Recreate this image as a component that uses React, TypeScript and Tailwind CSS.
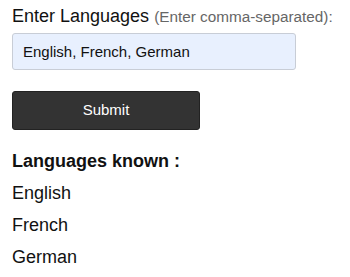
import { useState } from "react";

const App = () => {
  const [value, setValue] = useState("English, French, German");
  const [languages, setLanguages] = useState<string[]>(["English", "French", "German"]);

  const handleSubmit = () => {
    setLanguages(
      value
        .split(",")
        .map((l) => l.trim())
        .filter((l) => l.length > 0)
    );
  };

  return (
    <div className="px-3 pt-[5px] text-[#111] font-['Liberation_Sans',Arial,sans-serif]">
      <label className="block text-[18px] leading-[22px]">
        Enter Languages{" "}
        <span className="text-[15.3px] text-[#666]">(Enter comma-separated):</span>
      </label>
      <input
        value={value}
        onChange={(e) => setValue(e.target.value)}
        className="mt-[5px] w-[284px] h-[37px] px-[10px] text-[15px] bg-[#e8f0fe] border border-[#c8cdd6] rounded-[3px] outline-none"
      />
      <button
        onClick={handleSubmit}
        className="block mt-[21px] w-[188px] h-[39px] bg-[#333] text-white text-[15px] rounded-[3px] border border-[#222]"
      >
        Submit
      </button>
      <h3 className="mt-[20px] text-[18px] font-bold leading-[22px]">Languages known :</h3>
      <ul className="mt-[5px]">
        {languages.map((lang) => (
          <li key={lang} className="text-[18px] leading-[32px]">
            {lang}
          </li>
        ))}
      </ul>
    </div>
  );
};

export default App;
